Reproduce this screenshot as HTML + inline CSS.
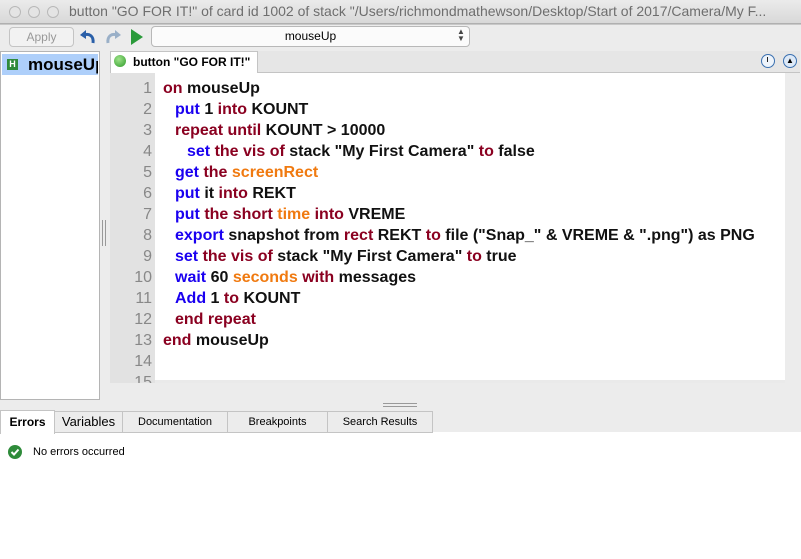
<!DOCTYPE html>
<html><head><style>
body{margin:0;width:801px;height:559px;background:#ececec;font-family:"Liberation Sans",sans-serif;position:relative;overflow:hidden}
.a{position:absolute}
.k{color:#1a00f0}.r{color:#8a0020}.o{color:#f07a10}
.code{font-weight:bold;font-size:16px;line-height:21px;color:#111}
.code div{white-space:pre;height:21px}
.i1{padding-left:12px}.i2{padding-left:24px}
</style></head><body>
<div class="a" style="left:0;top:0;width:801px;height:23px;background:linear-gradient(#ebebeb,#d8d8d8);border-bottom:1px solid #b0b0b0"></div>
<div class="a" style="left:9px;top:6px;width:10px;height:10px;border:1px solid #b8b8b8;border-radius:50%;background:#e4e4e4"></div>
<div class="a" style="left:28px;top:6px;width:10px;height:10px;border:1px solid #b8b8b8;border-radius:50%;background:#e4e4e4"></div>
<div class="a" style="left:47px;top:6px;width:10px;height:10px;border:1px solid #b8b8b8;border-radius:50%;background:#e4e4e4"></div>
<div class="a" style="left:69px;top:3px;font-size:14px;color:#6e6e6e;white-space:nowrap">button "GO FOR IT!" of card id 1002 of stack "/Users/richmondmathewson/Desktop/Start of 2017/Camera/My F...</div>
<div class="a" style="left:0;top:24px;width:801px;height:1px;background:#c8c8c8"></div>
<div class="a" style="left:9px;top:27px;width:63px;height:18px;border:1px solid #c4c4c4;border-radius:4px;background:#f2f2f2;font-size:12px;color:#999;text-align:center;line-height:18px">Apply</div>
<svg class="a" style="left:79px;top:28px" width="18" height="18"><path d="M14 15 C15 8 10 5 5 7" stroke="#2a5fa8" stroke-width="3" fill="none"/><path d="M1 7 L7 2 L7 11Z" fill="#2a5fa8"/></svg>
<svg class="a" style="left:104px;top:28px" width="18" height="18"><path d="M4 15 C3 8 8 5 13 7" stroke="#9ab0c8" stroke-width="3" fill="none"/><path d="M17 7 L11 2 L11 11Z" fill="#9ab0c8"/></svg>
<svg class="a" style="left:130px;top:28px" width="14" height="18"><path d="M1 1 L13 9 L1 17Z" fill="#2a9a3a"/></svg>
<div class="a" style="left:151px;top:26px;width:317px;height:19px;border:1px solid #b8b8b8;border-radius:4px;background:#fbfbfb;font-size:12px;text-align:center;line-height:19px">mouseUp</div>
<div class="a" style="left:457px;top:28px;font-size:8px;line-height:7px;color:#444">▲<br>▼</div>
<div class="a" style="left:110px;top:51px;width:690px;height:21px;background:#e6e6e6;border-bottom:1px solid #c4c4c4"></div>
<div class="a" style="left:110px;top:51px;width:146px;height:21px;background:#fff;border:1px solid #c4c4c4;border-bottom:none"></div>
<div class="a" style="left:114px;top:55px;width:12px;height:12px;border-radius:50%;background:radial-gradient(circle at 40% 35%,#9fe38a,#2e9a2a)"></div>
<div class="a" style="left:133px;top:55px;font-size:12px;font-weight:bold">button "GO FOR IT!"</div>
<div class="a" style="left:761px;top:54px;width:12px;height:12px;border:1px solid #3a70b0;border-radius:50%;background:#eef4fb"></div>
<div class="a" style="left:767px;top:57px;width:1px;height:5px;background:#222"></div>
<div class="a" style="left:783px;top:54px;width:12px;height:12px;border:1px solid #3a70b0;border-radius:50%;background:#dde9f7;font-size:8px;text-align:center;line-height:12px">▲</div>
<div class="a" style="left:110px;top:73px;width:675px;height:310px;background:#fff"></div>
<div class="a" style="left:110px;top:73px;width:45px;height:310px;background:#e2e2e2"></div>
<div class="a" style="left:155px;top:380px;width:630px;height:4px;background:#eaeaea"></div>
<div class="a code" style="left:110px;top:78px;width:42px;text-align:right;font-weight:normal;color:#888">1<br>2<br>3<br>4<br>5<br>6<br>7<br>8<br>9<br>10<br>11<br>12<br>13<br>14<br>15</div>
<div class="a code" style="left:163px;top:78px">
<div><span class="r">on</span> mouseUp</div>
<div class="i1"><span class="k">put</span> 1 <span class="r">into</span> KOUNT</div>
<div class="i1"><span class="r">repeat until</span> KOUNT &gt; 10000</div>
<div class="i2"><span class="k">set</span> <span class="r">the vis of</span> stack "My First Camera" <span class="r">to</span> false</div>
<div class="i1"><span class="k">get</span> <span class="r">the</span> <span class="o">screenRect</span></div>
<div class="i1"><span class="k">put</span> it <span class="r">into</span> REKT</div>
<div class="i1"><span class="k">put</span> <span class="r">the short</span> <span class="o">time</span> <span class="r">into</span> VREME</div>
<div class="i1"><span class="k">export</span> snapshot from <span class="r">rect</span> REKT <span class="r">to</span> file ("Snap_" &amp; VREME &amp; ".png") as PNG</div>
<div class="i1"><span class="k">set</span> <span class="r">the vis of</span> stack "My First Camera" <span class="r">to</span> true</div>
<div class="i1"><span class="k">wait</span> 60 <span class="o">seconds</span> <span class="r">with</span> messages</div>
<div class="i1"><span class="k">Add</span> 1 <span class="r">to</span> KOUNT</div>
<div class="i1"><span class="r">end repeat</span></div>
<div><span class="r">end</span> mouseUp</div>
</div>
<div class="a" style="left:100px;top:383px;width:701px;height:6px;background:#ececec"></div>
<div class="a" style="left:0;top:51px;width:98px;height:347px;background:#fff;border:1px solid #b4b4b4"></div>
<div class="a" style="left:2px;top:54px;width:96px;height:21px;background:#aecffa"></div>
<div class="a" style="left:7px;top:59px;width:11px;height:11px;background:#2f8a3a;color:#fff;font-size:9px;font-weight:bold;text-align:center;line-height:11px">H</div>
<div class="a" style="left:28px;top:55px;font-size:17px;font-weight:bold;width:70px;overflow:hidden;white-space:nowrap">mouseUp</div>
<div class="a" style="left:102px;top:220px;width:1px;height:26px;background:#999;box-shadow:3px 0 #999"></div>
<div class="a" style="left:383px;top:403px;width:34px;height:1px;background:#999;box-shadow:0 3px #999"></div>
<div class="a" style="left:0;top:432px;width:801px;height:127px;background:#fff"></div>
<div class="a" style="left:0;top:410px;width:53px;height:23px;background:#fff;border:1px solid #c4c4c4;border-bottom:none;font-size:12px;font-weight:bold;text-align:center;line-height:23px">Errors</div>
<div class="a" style="left:54px;top:411px;width:67px;height:20px;border:1px solid #c4c4c4;font-size:13px;text-align:center;line-height:20px;background:#ececec">Variables</div>
<div class="a" style="left:122px;top:411px;width:104px;height:20px;border:1px solid #c4c4c4;font-size:11px;text-align:center;line-height:20px;background:#ececec">Documentation</div>
<div class="a" style="left:227px;top:411px;width:99px;height:20px;border:1px solid #c4c4c4;font-size:11px;text-align:center;line-height:20px;background:#ececec">Breakpoints</div>
<div class="a" style="left:327px;top:411px;width:104px;height:20px;border:1px solid #c4c4c4;font-size:11px;text-align:center;line-height:20px;background:#ececec">Search Results</div>
<svg class="a" style="left:8px;top:445px" width="14" height="14"><circle cx="7" cy="7" r="7" fill="#2e8b3a"/><path d="M3.5 7 L6 9.5 L10.5 4.5" stroke="#fff" stroke-width="2" fill="none"/></svg>
<div class="a" style="left:33px;top:446px;font-size:11px">No errors occurred</div>
</body></html>
